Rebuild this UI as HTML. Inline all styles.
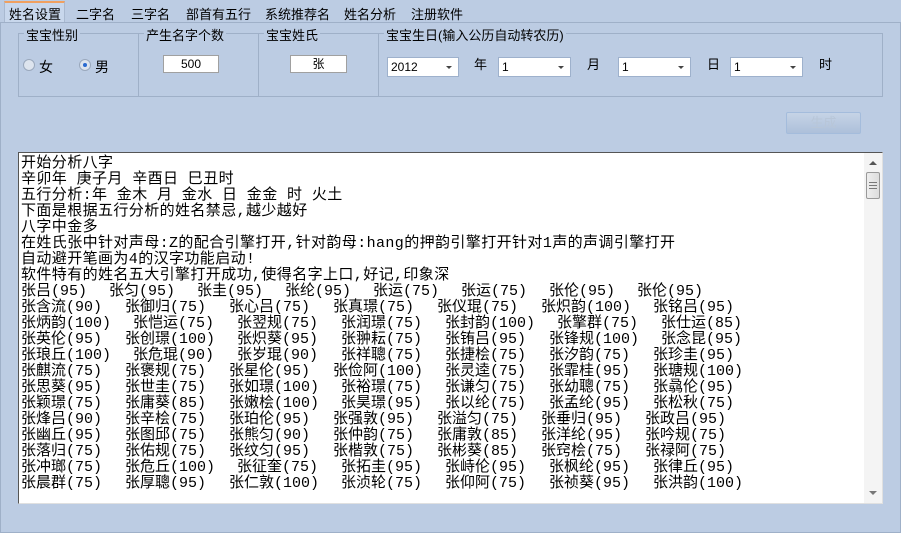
<!DOCTYPE html>
<html><head><meta charset="utf-8"><style>
*{margin:0;padding:0;box-sizing:border-box}
body{width:901px;height:533px;background:#bccce3;position:relative;overflow:hidden;font-family:"Liberation Sans","Noto Sans CJK SC",sans-serif;font-size:13px;color:#000}
.a{position:absolute;white-space:nowrap}
.tab{top:4px;font-size:13px}
.gb{position:absolute;border:1px solid #9fb0c8;top:33px;height:64px}
.lbl{position:absolute;top:-9px;left:5px;background:#bccce3;padding:0 2px;font-size:13px}
.inp{position:absolute;background:#fff;border:1px solid #a0a0a0;height:18px;text-align:center;font-size:12px;line-height:16px}
.cb{position:absolute;background:#fff;border:1px solid #9eb1cc;height:20px;top:57px;font-size:12px;line-height:18px;padding-left:3px}
.cb:after{content:"";position:absolute;right:6px;top:8px;border-left:3px solid transparent;border-right:3px solid transparent;border-top:3px solid #444}
.txt{position:absolute;left:18px;top:152px;width:865px;height:352px;background:#fff;border-top:1px solid #555;border-left:1px solid #555;border-right:1px solid #e0e0e0;border-bottom:1px solid #e0e0e0;overflow:hidden;padding-top:3px}
.ln{font-family:"Liberation Mono","Noto Sans CJK SC",monospace;font-size:15px;line-height:16px;height:16px;padding-left:2px;white-space:nowrap}
.ln.h{letter-spacing:0.4px}
.ln span{display:inline-block;overflow:visible;white-space:nowrap}
</style></head><body>
<div class="a" style="left:4px;top:1px;width:61px;height:22px;background:#c8d7ec;border:1px solid #a9b9d0;border-top:2px solid #f0a060;border-bottom:none"></div>
<div class="a tab" style="left:9px">姓名设置</div>
<div class="a tab" style="left:76px">二字名</div>
<div class="a tab" style="left:131px">三字名</div>
<div class="a tab" style="left:186px">部首有五行</div>
<div class="a tab" style="left:265px">系统推荐名</div>
<div class="a tab" style="left:344px">姓名分析</div>
<div class="a tab" style="left:411px">注册软件</div>
<div class="a" style="left:0;top:22px;width:901px;height:511px;border:1px solid #9fb0c8"></div>

<div class="gb" style="left:18px;width:121px"><div class="lbl">宝宝性别</div></div>
<div class="gb" style="left:138px;width:121px"><div class="lbl">产生名字个数</div></div>
<div class="gb" style="left:258px;width:121px"><div class="lbl">宝宝姓氏</div></div>
<div class="gb" style="left:378px;width:505px"><div class="lbl">宝宝生日(输入公历自动转农历)</div></div>

<div class="a" style="left:23px;top:59px;width:12px;height:12px;border-radius:50%;border:1px solid #9aa8bc;background:#dde4ee"></div>
<div class="a" style="left:39px;top:57px;font-size:14px">女</div>
<div class="a" style="left:79px;top:59px;width:12px;height:12px;border-radius:50%;border:1px solid #9aa8bc;background:#dde4ee"></div>
<div class="a" style="left:83px;top:63px;width:4px;height:4px;border-radius:50%;background:#2a6ad0"></div>
<div class="a" style="left:95px;top:57px;font-size:14px">男</div>

<div class="inp" style="left:163px;top:55px;width:56px">500</div>
<div class="inp" style="left:290px;top:55px;width:57px">张</div>

<div class="cb" style="left:387px;width:72px">2012</div>
<div class="a" style="left:474px;top:54px">年</div>
<div class="cb" style="left:498px;width:73px">1</div>
<div class="a" style="left:587px;top:54px">月</div>
<div class="cb" style="left:618px;width:73px">1</div>
<div class="a" style="left:707px;top:54px">日</div>
<div class="cb" style="left:730px;width:73px">1</div>
<div class="a" style="left:819px;top:54px">时</div>

<div class="a" style="left:786px;top:112px;width:75px;height:22px;border:1px solid #a4bcdc;border-radius:2px;background:linear-gradient(#c6d4e6,#adc0da);color:#b8c6d8;text-align:center;line-height:20px">生成</div>

<div class="txt">
<div class="ln h">开始分析八字</div>
<div class="ln h">辛卯年 庚子月 辛酉日 巳丑时</div>
<div class="ln h">五行分析:年 金木 月 金水 日 金金 时 火土</div>
<div class="ln h">下面是根据五行分析的姓名禁忌,越少越好</div>
<div class="ln h">八字中金多</div>
<div class="ln h">在姓氏张中针对声母:Z的配合引擎打开,针对韵母:hang的押韵引擎打开针对1声的声调引擎打开</div>
<div class="ln h">自动避开笔画为4的汉字功能启动!</div>
<div class="ln h">软件特有的姓名五大引擎打开成功,使得名字上口,好记,印象深</div>
<div class="ln"><span style="width:88px">张吕(95)</span><span style="width:88px">张匀(95)</span><span style="width:88px">张圭(95)</span><span style="width:88px">张纶(95)</span><span style="width:88px">张运(75)</span><span style="width:88px">张运(75)</span><span style="width:88px">张伦(95)</span><span style="width:88px">张伦(95)</span></div>
<div class="ln"><span style="width:104px">张含流(90)</span><span style="width:104px">张御归(75)</span><span style="width:104px">张心吕(75)</span><span style="width:104px">张真璟(75)</span><span style="width:104px">张仪琨(75)</span><span style="width:112px">张炽韵(100)</span><span style="width:104px">张铭吕(95)</span></div>
<div class="ln"><span style="width:112px">张炳韵(100)</span><span style="width:104px">张恺运(75)</span><span style="width:104px">张翌规(75)</span><span style="width:104px">张润璟(75)</span><span style="width:112px">张封韵(100)</span><span style="width:104px">张擎群(75)</span><span style="width:104px">张仕运(85)</span></div>
<div class="ln"><span style="width:104px">张英伦(95)</span><span style="width:112px">张创璟(100)</span><span style="width:104px">张炽葵(95)</span><span style="width:104px">张翀耘(75)</span><span style="width:104px">张铕吕(95)</span><span style="width:112px">张锋规(100)</span><span style="width:104px">张念昆(95)</span></div>
<div class="ln"><span style="width:112px">张琅丘(100)</span><span style="width:104px">张危琨(90)</span><span style="width:104px">张岁琨(90)</span><span style="width:104px">张祥聰(75)</span><span style="width:104px">张捷桧(75)</span><span style="width:104px">张汐韵(75)</span><span style="width:104px">张珍圭(95)</span></div>
<div class="ln"><span style="width:104px">张麒流(75)</span><span style="width:104px">张褒规(75)</span><span style="width:104px">张星伦(95)</span><span style="width:112px">张俭阿(100)</span><span style="width:104px">张灵逵(75)</span><span style="width:104px">张霏桂(95)</span><span style="width:112px">张瑭规(100)</span></div>
<div class="ln"><span style="width:104px">张思葵(95)</span><span style="width:104px">张世圭(75)</span><span style="width:112px">张如璟(100)</span><span style="width:104px">张裕璟(75)</span><span style="width:104px">张谦匀(75)</span><span style="width:104px">张幼聰(75)</span><span style="width:104px">张骉伦(95)</span></div>
<div class="ln"><span style="width:104px">张颖璟(75)</span><span style="width:104px">张庸葵(85)</span><span style="width:112px">张嫩桧(100)</span><span style="width:104px">张昊璟(95)</span><span style="width:104px">张以纶(75)</span><span style="width:104px">张孟纶(95)</span><span style="width:104px">张松秋(75)</span></div>
<div class="ln"><span style="width:104px">张烽吕(90)</span><span style="width:104px">张辛桧(75)</span><span style="width:104px">张珀伦(95)</span><span style="width:104px">张强敦(95)</span><span style="width:104px">张溢匀(75)</span><span style="width:104px">张垂归(95)</span><span style="width:104px">张政吕(95)</span></div>
<div class="ln"><span style="width:104px">张幽丘(95)</span><span style="width:104px">张图邱(75)</span><span style="width:104px">张熊匀(90)</span><span style="width:104px">张仲韵(75)</span><span style="width:104px">张庸敦(85)</span><span style="width:104px">张洋纶(95)</span><span style="width:104px">张吟规(75)</span></div>
<div class="ln"><span style="width:104px">张落归(75)</span><span style="width:104px">张佑规(75)</span><span style="width:104px">张纹匀(95)</span><span style="width:104px">张楷敦(75)</span><span style="width:104px">张彬葵(85)</span><span style="width:104px">张窍桧(75)</span><span style="width:104px">张禄阿(75)</span></div>
<div class="ln"><span style="width:104px">张冲瑯(75)</span><span style="width:112px">张危丘(100)</span><span style="width:104px">张征奎(75)</span><span style="width:104px">张拓圭(95)</span><span style="width:104px">张峙伦(95)</span><span style="width:104px">张枫纶(95)</span><span style="width:104px">张律丘(95)</span></div>
<div class="ln"><span style="width:104px">张晨群(75)</span><span style="width:104px">张厚聰(95)</span><span style="width:112px">张仁敦(100)</span><span style="width:104px">张浈轮(75)</span><span style="width:104px">张仰阿(75)</span><span style="width:104px">张祯葵(95)</span><span style="width:104px">张洪韵(100)</span></div>
<div class="a" style="left:845px;top:0;width:18px;height:350px;background:#f4f4f4">
 <div class="a" style="left:5px;top:8px;border-left:4px solid transparent;border-right:4px solid transparent;border-bottom:4px solid #555"></div>
 <div class="a" style="left:2px;top:19px;width:14px;height:27px;border:1px solid #999;border-radius:2px;background:linear-gradient(90deg,#eee,#ddd)"></div>
 <div class="a" style="left:5px;top:29px;width:8px;height:7px;border-top:1px solid #777;border-bottom:1px solid #777"></div>
 <div class="a" style="left:5px;top:32px;width:8px;height:1px;background:#777"></div>
 <div class="a" style="left:5px;top:338px;border-left:4px solid transparent;border-right:4px solid transparent;border-top:4px solid #777"></div>
</div>
</div>
</body></html>
